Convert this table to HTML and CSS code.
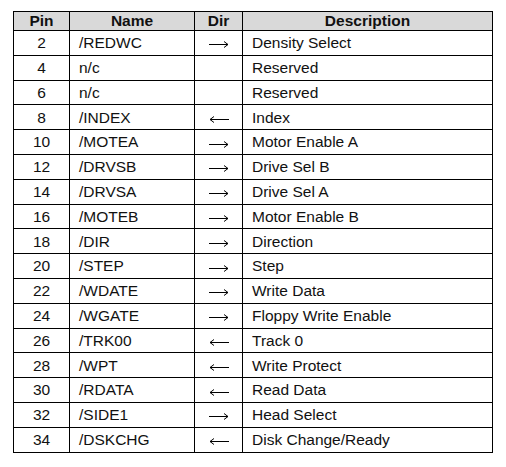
FILE: index.html
```html
<!DOCTYPE html>
<html>
<head>
<meta charset="utf-8">
<link rel="stylesheet" href="styles.css">
</head>
<body>
<table class="pins">
<colgroup><col class="c-pin"><col class="c-name"><col class="c-dir"><col class="c-desc"></colgroup>
<thead>
<tr><th>Pin</th><th>Name</th><th>Dir</th><th>Description</th></tr>
</thead>
<tbody>
<tr><td class="pin">2</td><td class="name">/REDWC</td><td class="dir"><svg class="arr" viewBox="0 0 20 8"><path d="M0 4.5H19M15 1.5L19 4.5L15 7.5"/></svg></td><td class="desc">Density Select</td></tr>
<tr><td class="pin">4</td><td class="name">n/c</td><td class="dir"></td><td class="desc">Reserved</td></tr>
<tr><td class="pin">6</td><td class="name">n/c</td><td class="dir"></td><td class="desc">Reserved</td></tr>
<tr><td class="pin">8</td><td class="name">/INDEX</td><td class="dir"><svg class="arr" viewBox="0 0 20 8"><path d="M20 4.5H1M5 1.5L1 4.5L5 7.5"/></svg></td><td class="desc">Index</td></tr>
<tr><td class="pin">10</td><td class="name">/MOTEA</td><td class="dir"><svg class="arr" viewBox="0 0 20 8"><path d="M0 4.5H19M15 1.5L19 4.5L15 7.5"/></svg></td><td class="desc">Motor Enable A</td></tr>
<tr><td class="pin">12</td><td class="name">/DRVSB</td><td class="dir"><svg class="arr" viewBox="0 0 20 8"><path d="M0 4.5H19M15 1.5L19 4.5L15 7.5"/></svg></td><td class="desc">Drive Sel B</td></tr>
<tr><td class="pin">14</td><td class="name">/DRVSA</td><td class="dir"><svg class="arr" viewBox="0 0 20 8"><path d="M0 4.5H19M15 1.5L19 4.5L15 7.5"/></svg></td><td class="desc">Drive Sel A</td></tr>
<tr><td class="pin">16</td><td class="name">/MOTEB</td><td class="dir"><svg class="arr" viewBox="0 0 20 8"><path d="M0 4.5H19M15 1.5L19 4.5L15 7.5"/></svg></td><td class="desc">Motor Enable B</td></tr>
<tr><td class="pin">18</td><td class="name">/DIR</td><td class="dir"><svg class="arr" viewBox="0 0 20 8"><path d="M0 4.5H19M15 1.5L19 4.5L15 7.5"/></svg></td><td class="desc">Direction</td></tr>
<tr><td class="pin">20</td><td class="name">/STEP</td><td class="dir"><svg class="arr" viewBox="0 0 20 8"><path d="M0 4.5H19M15 1.5L19 4.5L15 7.5"/></svg></td><td class="desc">Step</td></tr>
<tr><td class="pin">22</td><td class="name">/WDATE</td><td class="dir"><svg class="arr" viewBox="0 0 20 8"><path d="M0 4.5H19M15 1.5L19 4.5L15 7.5"/></svg></td><td class="desc">Write Data</td></tr>
<tr><td class="pin">24</td><td class="name">/WGATE</td><td class="dir"><svg class="arr" viewBox="0 0 20 8"><path d="M0 4.5H19M15 1.5L19 4.5L15 7.5"/></svg></td><td class="desc">Floppy Write Enable</td></tr>
<tr><td class="pin">26</td><td class="name">/TRK00</td><td class="dir"><svg class="arr" viewBox="0 0 20 8"><path d="M20 4.5H1M5 1.5L1 4.5L5 7.5"/></svg></td><td class="desc">Track 0</td></tr>
<tr><td class="pin">28</td><td class="name">/WPT</td><td class="dir"><svg class="arr" viewBox="0 0 20 8"><path d="M20 4.5H1M5 1.5L1 4.5L5 7.5"/></svg></td><td class="desc">Write Protect</td></tr>
<tr><td class="pin">30</td><td class="name">/RDATA</td><td class="dir"><svg class="arr" viewBox="0 0 20 8"><path d="M20 4.5H1M5 1.5L1 4.5L5 7.5"/></svg></td><td class="desc">Read Data</td></tr>
<tr><td class="pin">32</td><td class="name">/SIDE1</td><td class="dir"><svg class="arr" viewBox="0 0 20 8"><path d="M0 4.5H19M15 1.5L19 4.5L15 7.5"/></svg></td><td class="desc">Head Select</td></tr>
<tr><td class="pin">34</td><td class="name">/DSKCHG</td><td class="dir"><svg class="arr" viewBox="0 0 20 8"><path d="M20 4.5H1M5 1.5L1 4.5L5 7.5"/></svg></td><td class="desc">Disk Change/Ready</td></tr>
</tbody>
</table>
</body>
</html>
```
FILE: styles.css
```css
html, body {
  margin: 0;
  padding: 0;
  background: #fff;
}
body {
  padding: 11px 0 0 13px;
  font-family: "Liberation Sans", Arial, sans-serif;
  font-size: 15.5px;
  color: #111;
}
.pins {
  border-collapse: collapse;
  table-layout: fixed;
  width: 479px;
}
.c-pin { width: 56px; }
.c-name { width: 125px; }
.c-dir { width: 48px; }
.c-desc { width: 250px; }
.pins th, .pins td {
  border: 1px solid #000;
  padding: 0;
  line-height: 1;
}
.pins th {
  background: #d9d9d9;
  font-weight: bold;
  text-align: center;
  height: 18px;
}
.pins td {
  height: 23.8px;
}
.pin, .dir {
  text-align: center;
}
.name, .desc {
  padding-left: 9px !important;
  text-align: left;
}
.arr {
  display: block;
  width: 20px;
  height: 8px;
  margin: 3px auto 0;
  fill: none;
  stroke: #000;
  stroke-width: 1;
}
```
